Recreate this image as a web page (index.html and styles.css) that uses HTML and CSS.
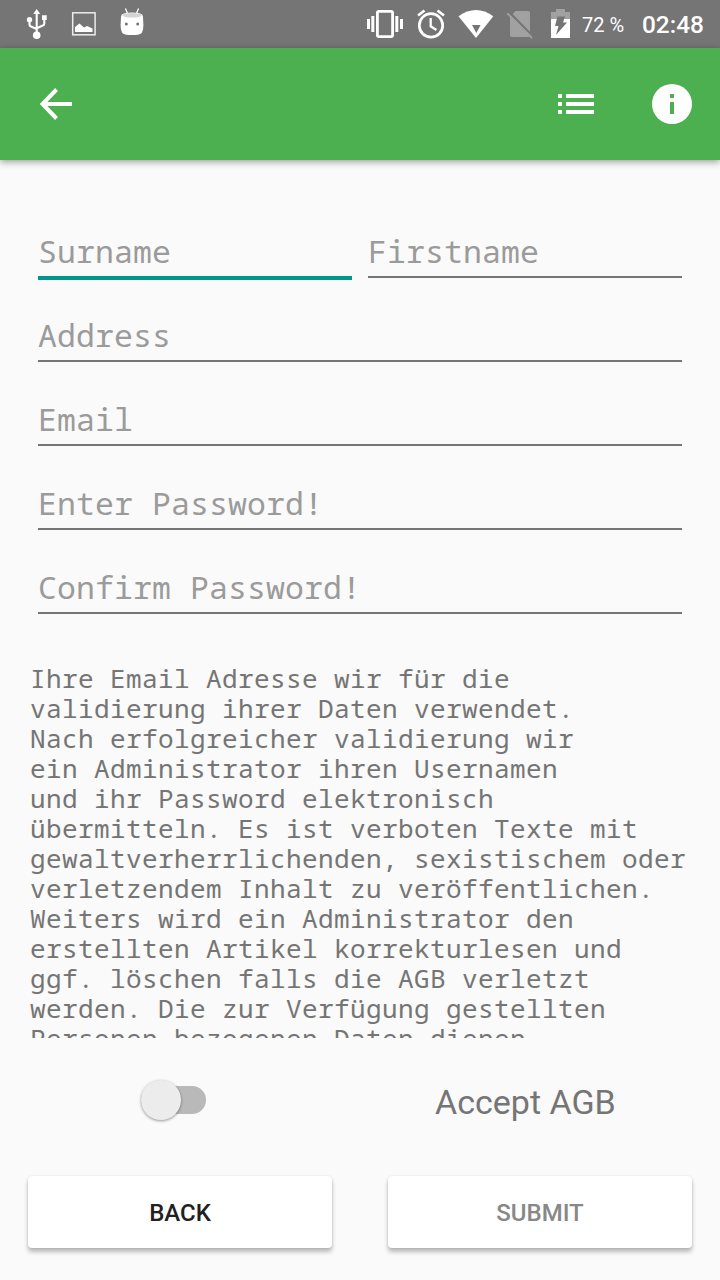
FILE: index.html
```html
<!DOCTYPE html>
<html lang="de">
<head>
<meta charset="utf-8">
<title>Registration</title>
<link rel="stylesheet" href="styles.css">
</head>
<body>
<div class="screen">
  <header class="status">
    <svg class="status-icons" width="150" height="48" viewBox="0 0 150 48">
      <g fill="none" stroke="#fff" stroke-width="2.100">
        <path d="M36.700 13V34M29.500 21v3.500q0 1.500 1.500 2l5.700 2.500M44.300 19v4.500q0 1.500-1.500 2l-6.100 2.700"/>
      </g>
      <path d="M36.700 9l3.500 5h-7zM42 15.200h4.700v4.700H42z" fill="#fff"/>
      <circle cx="29.500" cy="19.800" r="2.700" fill="#fff"/><circle cx="36.700" cy="35.300" r="3.800" fill="#fff"/>
      <rect x="72.700" y="12.800" width="22.400" height="22" fill="none" stroke="#ececec" stroke-width="1.500"/>
      <path d="M75 32v-5l4.500-3.500 4.500 4 3-1.500 5.500 2.500V32z" fill="#fff"/>
      <path d="M125.500 8.500l2 5M138.500 8.500l-2 5" stroke="#fff" stroke-width="1.300"/>
      <path d="M121 17q0-3 4-3.800 7-1.200 14 0 4 .8 4 3.800l.4 8q0 5-1.400 7.500-1.500 2.600-10 2.600t-10-2.600q-1.400-2.500-1.400-7.500z" fill="#fff"/>
      <ellipse cx="132" cy="15.300" rx="9.500" ry="2.300" fill="#d4d4d4"/>
      <circle cx="126.300" cy="24" r="1.500" fill="#757575"/><circle cx="137.700" cy="24" r="1.500" fill="#757575"/>
    </svg>
    <svg class="status-icons" width="212" height="48" viewBox="360 0 212 48">
      <path d="M367 19h3v10h-3zM371.300 16h3v16h-3zM395.300 16h3v16h-3zM400 19h3v10h-3z" fill="#fff"/>
      <rect x="377.400" y="11.400" width="15.200" height="25.200" rx="1.500" fill="none" stroke="#fff" stroke-width="2.800"/>
      <g fill="none" stroke="#fff" stroke-width="2.700">
        <circle cx="431" cy="25.400" r="11.700"/><path d="M418 15.500l6.500-5M444 15.500l-6.500-5"/><path d="M430.700 18v8.300l5.700 3.700" stroke-width="2.300"/>
      </g>
      <path d="M458.500 16.200q17.400-12.400 34.800 0L476 38z" fill="#fff"/>
      <path d="M472 25h8.600L476.300 33z" fill="#757575"/>
      <path d="M515.500 11H528q2 0 2 2v22q0 2-2 2h-16q-2 0-2-2V17z" fill="#a1a1a1"/>
      <path d="M508.500 11.500L533 36.500" stroke="#757575" stroke-width="2.400"/>
      <path d="M507.300 13.300L532 38" stroke="#a1a1a1" stroke-width="1.800"/>
      <path d="M551 19v-7h5V9h9v3h5v7z" fill="#a1a1a1"/>
      <path d="M551 19h19v19h-19z" fill="#fff"/>
      <path d="M557.500 16.500h7.500l-2 6h4l-11 12.500 2.500-9h-3.500z" fill="#757575"/>
    </svg>
    <span class="battery">72 %</span>
    <span class="clock">02:48</span>
  </header>
  <nav class="appbar">
    <svg width="32" height="32" viewBox="0 0 32 32"><path d="M16.500 1.500L2.500 16l14 14.500M3 16h29" fill="none" stroke="#fff" stroke-width="4"/></svg>
    <svg class="list" width="36" height="20" viewBox="0 0 36 20"><path d="M0 0h4v4H0zM8 0h28v4H8zM0 8h4v4H0zM8 8h28v4H8zM0 16h4v4H0zM8 16h28v4H8z" fill="#fff"/></svg>
    <svg width="40" height="40" viewBox="0 0 40 40"><circle cx="20" cy="20" r="20" fill="#fff"/><path d="M18 10h4v4h-4zM18 18h4v12h-4z" fill="#4caf50"/></svg>
  </nav>
  <main class="form">
    <div class="names">
      <div class="field focused">Surname</div>
      <div class="field">Firstname</div>
    </div>
    <div class="field">Address</div>
    <div class="field">Email</div>
    <div class="field">Enter Password!</div>
    <div class="field">Confirm Password!</div>
  </main>
  <p class="terms">Ihre Email Adresse wir für die
validierung ihrer Daten verwendet.
Nach erfolgreicher validierung wir
ein Administrator ihren Usernamen
und ihr Password elektronisch
übermitteln. Es ist verboten Texte mit
gewaltverherrlichenden, sexistischem oder
verletzendem Inhalt zu veröffentlichen.
Weiters wird ein Administrator den
erstellten Artikel korrekturlesen und
ggf. löschen falls die AGB verletzt
werden. Die zur Verfügung gestellten
Personen bezogenen Daten dienen</p>
  <div class="accept">
    <div class="toggle"><div class="knob"></div></div>
    <span class="label">Accept AGB</span>
  </div>
  <div class="actions">
    <button class="btn">BACK</button>
    <button class="btn muted">SUBMIT</button>
  </div>
</div>
</body>
</html>
```
FILE: styles.css
```css
* { box-sizing: border-box; }
body { margin: 0; background: #fafafa; font-family: Roboto, "Liberation Sans", sans-serif; }
.screen { width: 720px; height: 1280px; overflow: hidden; display: flex; flex-direction: column; }
svg { display: block; flex: none; }
.status { height: 48px; flex: none; background: #757575; color: #fff; display: flex; align-items: center; }
.status-icons + .status-icons { margin-left: 210px; }
.battery { margin-left: 10px; width: 60px; font-size: 20px; line-height: 48px; padding-top: 2px; white-space: nowrap; }
.clock { font-size: 24.4px; font-weight: 500; line-height: 48px; padding-top: 2px; }
.appbar { height: 112px; flex: none; background: #4caf50; display: flex; align-items: center; padding: 0 28px 0 40px; box-shadow: 0 2px 7px rgba(0,0,0,.38); }
.list { margin-left: auto; margin-right: 58px; }
.form { padding: 62px 38px 0; flex: none; }
.names { display: grid; grid-template-columns: 1fr 1fr; gap: 16px; }
.field { height: 56px; margin-bottom: 28px; border-bottom: 2px solid #757575; color: #9b9b9b; font: 31.5px/58px "Droid Sans Mono", "Noto Mono", "Noto Sans Mono", "DejaVu Sans Mono", monospace; letter-spacing: .1px; white-space: pre; }
.focused { height: 58px; margin-bottom: 26px; border-bottom: 4px solid #009688; }
.terms { margin: 22px 0 0 30px; height: 374px; flex: none; overflow: hidden; color: #757575; font: 26px/30px "Droid Sans Mono", "Noto Mono", "Noto Sans Mono", "DejaVu Sans Mono", monospace; letter-spacing: .4px; white-space: pre; }
.terms::before { content: ""; display: block; margin-top: -1px; }
.accept { height: 124px; flex: none; display: grid; grid-template-columns: 141px 294px 1fr; align-items: center; }
.toggle { grid-column: 2; width: 65px; height: 28px; border-radius: 14px; background: #b9b9b9; display: flex; align-items: center; }
.knob { width: 40px; height: 40px; flex: none; border-radius: 50%; background: #ececec; box-shadow: 0 1px 3px rgba(0,0,0,.4); }
.label { color: #757575; font-size: 34px; line-height: 44px; padding-top: 3px; }
.actions { display: grid; grid-template-columns: 304px 304px; gap: 56px; padding: 14px 28px 0; }
.btn { height: 72px; border: 0; border-radius: 4px; background: #fff; color: #212121; font: 500 24px/28px Roboto, sans-serif; padding: 2px 0 0; box-shadow: 0 4px 4px rgba(0,0,0,.26), 0 0 2px rgba(0,0,0,.12); }
.muted { color: #888; }
```
